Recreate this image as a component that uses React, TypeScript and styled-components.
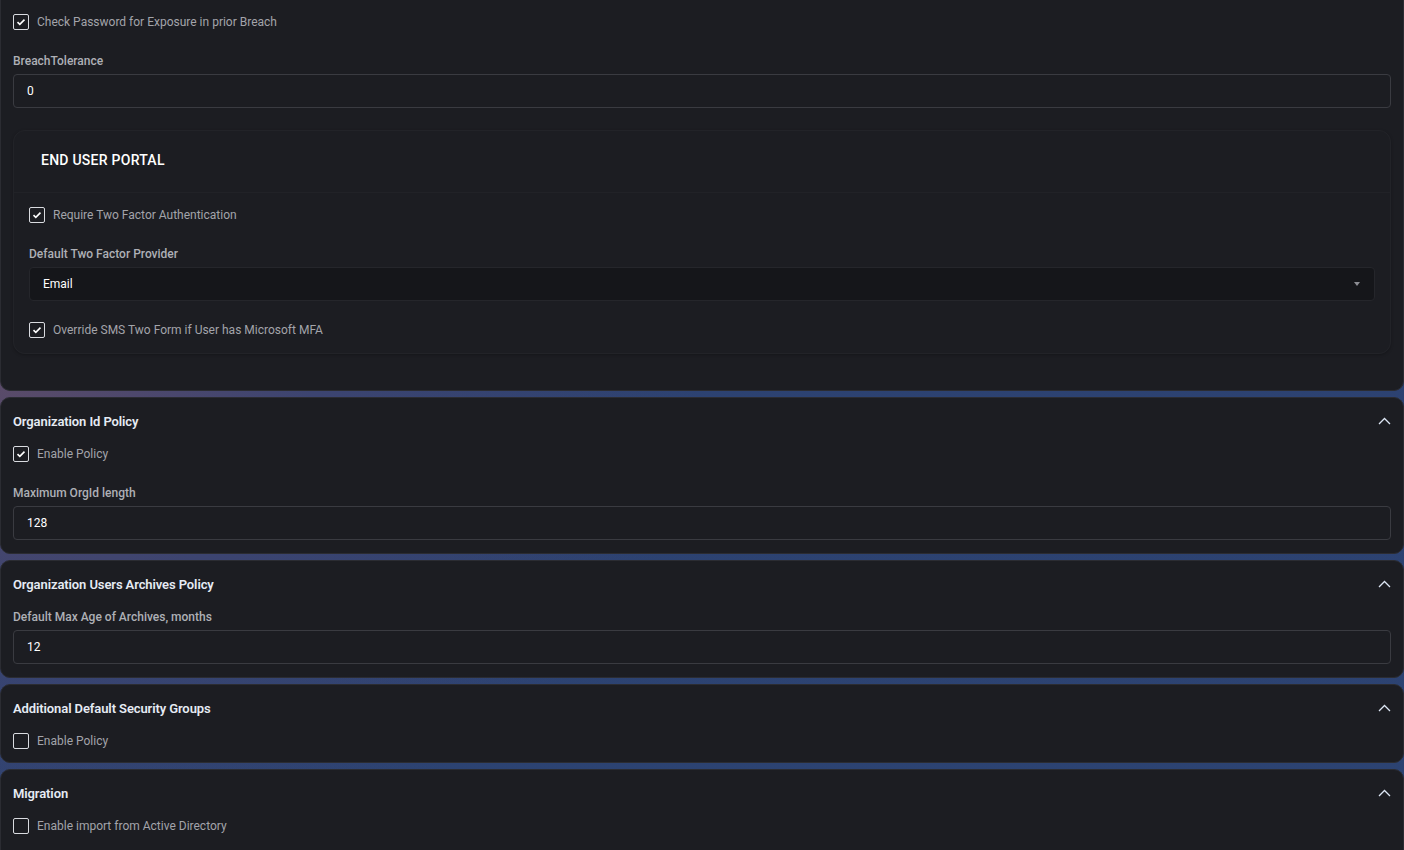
import React from 'react';
import styled, { createGlobalStyle } from 'styled-components';

const GlobalStyle = createGlobalStyle`
  html, body {
    margin: 0;
    padding: 0;
    background: #1c1d22;
  }
  body {
    font-family: Roboto, "Liberation Sans", Arial, sans-serif;
    -webkit-font-smoothing: antialiased;
  }
`;

const Page = styled.div`
  height: 850px;
  display: flex;
  flex-direction: column;
  gap: 6px;
  background: radial-gradient(ellipse 700px 500px at 0% 45%, #5a4b69 0%, #3c4470 45%, rgba(44, 66, 112, 0) 100%),
    linear-gradient(180deg, #2d4170 0%, #2c4372 100%);
  overflow: hidden;
`;

const Card = styled.section<{ $first?: boolean; $last?: boolean }>`
  background: #1c1d22;
  border: 1px solid #2b2c32;
  border-radius: ${({ $first }) => ($first ? '0 0 10px 10px' : '10px')};
  border-top: ${({ $first }) => ($first ? 'none' : '1px solid #2b2c32')};
  padding: ${({ $first, $last }) => ($first ? '14px 12px 36px' : $last ? '15px 12px 40px' : '15px 12px 13px')};
  display: flex;
  flex-direction: column;
  flex-shrink: 0;
`;

const CardHeader = styled.div`
  display: flex;
  align-items: center;
  justify-content: space-between;
  height: 16px;
  margin-bottom: 17px;
`;

const CardTitle = styled.h3`
  margin: 0;
  font-size: 13px;
  font-weight: 600;
  color: #e6ebf4;
  letter-spacing: -0.1px;
`;

const Chevron = styled.svg`
  width: 13px;
  height: 8px;
`;

const CheckRow = styled.label<{ $mb?: number }>`
  display: flex;
  align-items: center;
  gap: 8px;
  height: 16px;
  margin-bottom: ${({ $mb }) => $mb ?? 0}px;
  font-size: 12px;
  color: #a3a4aa;
`;

const Box = styled.span`
  width: 14px;
  height: 14px;
  border: 1.3px solid #d9dbe0;
  border-radius: 2px;
  display: flex;
  align-items: center;
  justify-content: center;
  flex-shrink: 0;
`;

const FieldLabel = styled.div`
  font-size: 12px;
  line-height: 12px;
  padding-top: 2px;
  font-weight: 500;
  color: #aeb0b6;
  margin-bottom: 7px;
`;

const Input = styled.div`
  height: 32px;
  border: 1px solid #3a3b41;
  border-radius: 4px;
  display: flex;
  align-items: center;
  padding: 0 13px;
  font-size: 12px;
  color: #ffffff;
`;

const Select = styled(Input)`
  background: #15161a;
  border-color: #25262b;
  justify-content: space-between;
`;

const Caret = styled.span`
  width: 0;
  height: 0;
  border-left: 3px solid transparent;
  border-right: 3px solid transparent;
  border-top: 4px solid #8d8e94;
  margin-right: 1px;
`;

const InnerCard = styled.div`
  margin-top: 22px;
  border: 1px solid #222328;
  border-radius: 12px;
  box-shadow: 0 1px 3px rgba(0, 0, 0, 0.25);
`;

const InnerHeader = styled.div`
  padding: 19px 27px 22px;
  border-bottom: 1px solid #212227;
  font-size: 14px;
  line-height: 20px;
  font-weight: 500;
  letter-spacing: 0.25px;
  color: #ffffff;
`;

const InnerBody = styled.div`
  padding: 14px 15px 15px;
  display: flex;
  flex-direction: column;
`;

const Field = styled.div<{ $mb?: number }>`
  display: flex;
  flex-direction: column;
  margin-bottom: ${({ $mb }) => $mb ?? 0}px;
`;

const Check: React.FC<{ checked?: boolean; label: string; mb?: number }> = ({ checked, label, mb }) => (
  <CheckRow $mb={mb}>
    <Box>
      {checked && (
        <svg width="10" height="8" viewBox="0 0 10 8">
          <path d="M1.5 4.2 L3.8 6.3 L8.5 1.6" fill="none" stroke="#ffffff" strokeWidth="1.6" />
        </svg>
      )}
    </Box>
    {label}
  </CheckRow>
);

const Header: React.FC<{ title: string }> = ({ title }) => (
  <CardHeader>
    <CardTitle>{title}</CardTitle>
    <Chevron viewBox="0 0 13 8">
      <path d="M1 7 L6.5 1.5 L12 7" fill="none" stroke="#dde7f5" strokeWidth="1.3" />
    </Chevron>
  </CardHeader>
);

const App: React.FC = () => {
  return (
    <>
      <GlobalStyle />
      <Page>
        <Card $first>
          <Check checked label="Check Password for Exposure in prior Breach" mb={23} />
          <Field>
            <FieldLabel>BreachTolerance</FieldLabel>
            <Input>0</Input>
          </Field>
          <InnerCard>
            <InnerHeader>END USER PORTAL</InnerHeader>
            <InnerBody>
              <Check checked label="Require Two Factor Authentication" mb={23} />
              <Field $mb={21}>
                <FieldLabel>Default Two Factor Provider</FieldLabel>
                <Select>
                  Email
                  <Caret />
                </Select>
              </Field>
              <Check checked label="Override SMS Two Form if User has Microsoft MFA" />
            </InnerBody>
          </InnerCard>
        </Card>

        <Card>
          <Header title="Organization Id Policy" />
          <Check checked label="Enable Policy" mb={23} />
          <Field>
            <FieldLabel>Maximum OrgId length</FieldLabel>
            <Input>128</Input>
          </Field>
        </Card>

        <Card>
          <Header title="Organization Users Archives Policy" />
          <Field>
            <FieldLabel>Default Max Age of Archives, months</FieldLabel>
            <Input>12</Input>
          </Field>
        </Card>

        <Card>
          <Header title="Additional Default Security Groups" />
          <Check label="Enable Policy" />
        </Card>

        <Card $last>
          <Header title="Migration" />
          <Check label="Enable import from Active Directory" />
        </Card>
      </Page>
    </>
  );
};

export default App;
